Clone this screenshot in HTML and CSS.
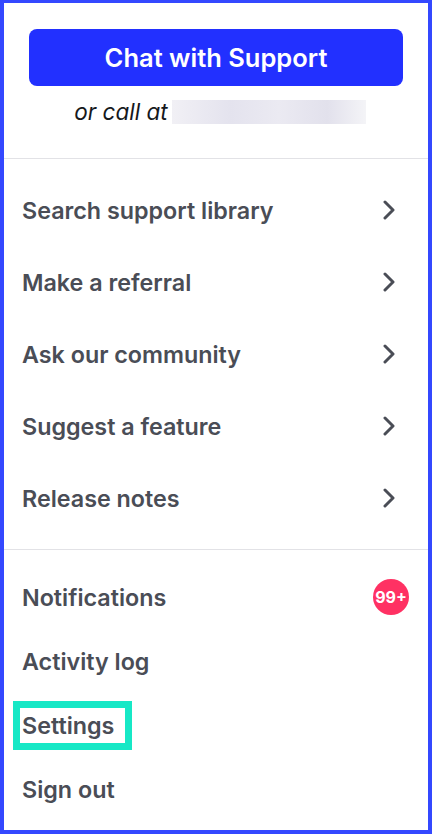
FILE: index.html
```html
<!DOCTYPE html>
<html lang="en">

<head>
    <meta charset="UTF-8">
    <meta name="viewport" content="width=device-width, initial-scale=1.0">
    <title>Help menu</title>
    <link rel="stylesheet" href="styles.css">
</head>

<body>
    <div class="frame">
        <!-- support contact -->
        <div class="support">
            <button class="chat-btn">Chat with Support</button>
            <div class="call">
                <span>or call at</span>
                <span class="phone"></span>
            </div>
        </div>

        <ul class="menu links">
            <li class="menu-item">Search support library <svg class="chevron" viewBox="0 0 14 20"><path d="M3 2 L11 10 L3 18" /></svg></li>
            <li class="menu-item">Make a referral <svg class="chevron" viewBox="0 0 14 20"><path d="M3 2 L11 10 L3 18" /></svg></li>
            <li class="menu-item">Ask our community <svg class="chevron" viewBox="0 0 14 20"><path d="M3 2 L11 10 L3 18" /></svg></li>
            <li class="menu-item">Suggest a feature <svg class="chevron" viewBox="0 0 14 20"><path d="M3 2 L11 10 L3 18" /></svg></li>
            <li class="menu-item">Release notes <svg class="chevron" viewBox="0 0 14 20"><path d="M3 2 L11 10 L3 18" /></svg></li>
        </ul>

        <ul class="menu account">
            <li class="menu-item">Notifications <span class="badge">99+</span></li>
            <li class="menu-item">Activity log</li>
            <li class="menu-item"><span class="highlight">Settings</span></li>
            <li class="menu-item">Sign out</li>
        </ul>
    </div>
</body>

</html>
```

FILE: styles.css
```css
body {
    margin: 0;
    padding: 0;
    font-family: Inter, "Noto Sans", sans-serif;
    background: #fff;
}

.frame {
    box-sizing: border-box;
    width: 432px;
    height: 834px;
    border: 4px solid #3448ff;
    border-top-width: 3px;
    display: flex;
    flex-direction: column;
}

.support {
    box-sizing: border-box;
    height: 156px;
    padding: 26px 25px 0;
    border-bottom: 1px solid #e2e2e6;
}

.chat-btn {
    display: block;
    width: 100%;
    height: 57px;
    border: none;
    border-radius: 8px;
    background: #2230ff;
    color: #fff;
    font-family: inherit;
    font-size: 25.5px;
    font-weight: 600;
}

.call {
    display: flex;
    justify-content: center;
    align-items: center;
    gap: 4px;
    margin-top: 12px;
    margin-left: 8px;
    font-size: 22.5px;
    font-style: italic;
    color: #16181c;
}

.phone {
    display: inline-block;
    width: 194px;
    height: 24px;
    background: linear-gradient(90deg, #f1f0f5 0%, #e4e3ee 30%, #ebeaf2 55%, #e2e1ec 80%, #f4f4f7 100%);
}

.menu {
    list-style: none;
    margin: 0;
    padding: 15px 0;
}

.links {
    border-bottom: 1px solid #e2e2e6;
}

.account {
    padding-bottom: 0;
}

.menu-item {
    display: flex;
    align-items: center;
    justify-content: space-between;
    padding: 0 19px 0 18px;
    height: 72px;
    font-size: 23.3px;
    font-weight: 600;
    color: #4a4d56;
}

.account .menu-item {
    height: 64px;
}

.chevron {
    width: 14px;
    height: 20px;
    margin-right: 13px;
    fill: none;
    stroke: #4a4d56;
    stroke-width: 3;
    stroke-linecap: round;
    stroke-linejoin: round;
}

.badge {
    display: flex;
    align-items: center;
    justify-content: center;
    width: 36px;
    height: 36px;
    border-radius: 50%;
    background: #ff3163;
    color: #fff;
    font-size: 16px;
    font-weight: 700;
}

.highlight {
    display: inline-block;
    line-height: 35px;
    padding: 0 11px 0 2px;
    margin-left: -2px;
    outline: 7px solid #17e8c6;
}
```
